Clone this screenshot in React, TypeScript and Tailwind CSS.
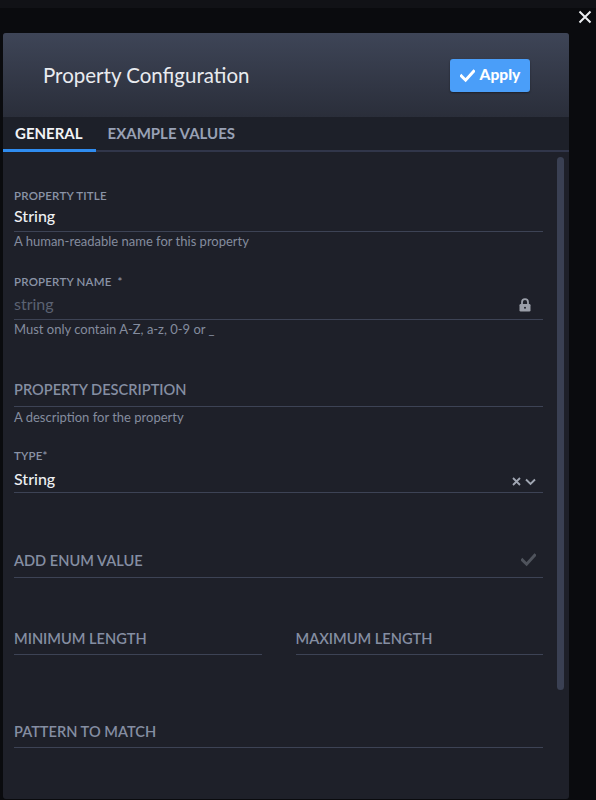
import React from 'react';

function Label({ children }: { children: React.ReactNode }) {
  return (
    <div className="h-[14px] text-[11.5px] leading-[14px] font-semibold tracking-[0.2px] text-[#8a93a6] uppercase">
      {children}
    </div>
  );
}

function Helper({ children, className = '' }: { children: React.ReactNode; className?: string }) {
  return <div className={`h-[16px] text-[13px] leading-[16px] text-[#848c9e] ${className}`}>{children}</div>;
}

function BigLabel({ children }: { children: React.ReactNode }) {
  return <span className="text-[14.6px] leading-[22px] font-semibold text-[#858ea2]">{children}</span>;
}

function LockIcon() {
  return (
    <svg width="12" height="14" viewBox="0 0 12 14" className="mb-[3px]">
      <path d="M3 6V4.2a3 3 0 0 1 6 0V6" fill="none" stroke="#9a9ea8" strokeWidth="1.8" />
      <rect x="0.5" y="6" width="11" height="7.5" rx="1.2" fill="#9a9ea8" />
      <circle cx="6" cy="9.7" r="1" fill="#1e2029" />
    </svg>
  );
}

function CheckIcon({ color, size = 15 }: { color: string; size?: number }) {
  return (
    <svg width={size} height={size} viewBox="0 0 16 16">
      <path d="M1.5 8.5 L6 13 L14.5 3.5" fill="none" stroke={color} strokeWidth="3.2" strokeLinecap="square" />
    </svg>
  );
}

export default function App() {
  return (
    <div className="min-h-[800px] w-full bg-[#0a0b0e] font-['Lato','Noto_Sans',sans-serif] overflow-hidden">
      <div className="h-[8px] bg-[#111216]" />
      <div className="h-[25px] flex justify-end pr-[4px] pt-[2px]">
        <svg width="14" height="14" viewBox="0 0 14 14">
          <path d="M1.5 1.5 L12.5 12.5 M12.5 1.5 L1.5 12.5" stroke="#eceef2" strokeWidth="2" />
        </svg>
      </div>

      <div className="ml-[3px] w-[566px] h-[766px] rounded-[3px] overflow-hidden bg-[#1e2029] flex flex-col">
        <div className="h-[84px] shrink-0 bg-gradient-to-b from-[#3e4557] to-[#2a2e3a] flex items-center justify-between pl-[40px] pr-[39px]">
          <div className="text-[20.5px] text-[#e9ebef] pt-[1px]">Property Configuration</div>
          <button className="h-[33px] w-[80px] rounded-[3px] bg-[#4a9ef9] flex items-center justify-center gap-[5px] text-white font-black text-[15.5px] shadow-[0_1px_2px_rgba(0,0,0,0.4)]">
            <CheckIcon color="#ffffff" size={15} />
            <span>Apply</span>
          </button>
        </div>

        <div className="h-[35px] shrink-0 bg-[#1d2029] border-b-2 border-[#31364a] flex">
          <div className="h-[35px] pl-[12px] pr-[13px] flex items-center border-b-[3px] border-[#2f8cf0] text-[15px] font-bold text-[#f2f3f5]">
            GENERAL
          </div>
          <div className="h-[33px] px-[12px] flex items-center text-[15px] font-bold text-[#98a1b5]">
            EXAMPLE VALUES
          </div>
        </div>

        <div className="flex flex-1 pl-[11px] pr-[4px]">
          <div className="w-[529px] pt-[37px]">
            <Label>Property Title</Label>
            <div className="h-[29px] border-b border-[#3d4355] flex items-end pb-[4px]">
              <span className="text-[16px] leading-[22px] font-medium text-[#eef0f3]">String</span>
            </div>
            <Helper className="mt-[1px]">A human-readable name for this property</Helper>

            <div className="mt-[26px]">
              <Label>
                Property Name <span className="ml-[3px]">*</span>
              </Label>
            </div>
            <div className="h-[31px] border-b border-[#3d4355] flex items-end justify-between pb-[4px] pr-[12px]">
              <span className="text-[16px] leading-[22px] text-[#5b6272]">string</span>
              <LockIcon />
            </div>
            <Helper className="mt-[1px]">Must only contain A-Z, a-z, 0-9 or _</Helper>

            <div className="mt-[35px] h-[35px] border-b border-[#3d4355] flex items-end pb-[5px]">
              <BigLabel>PROPERTY DESCRIPTION</BigLabel>
            </div>
            <Helper className="mt-[2px]">A description for the property</Helper>

            <div className="mt-[24px]">
              <Label>Type*</Label>
            </div>
            <div className="h-[30px] border-b border-[#3d4355] flex items-end justify-between pb-[2px] pr-[7px]">
              <span className="text-[16px] leading-[22px] font-medium text-[#eef0f3]">String</span>
              <div className="flex items-center gap-[4px] mb-[4px]">
                <svg width="9" height="9" viewBox="0 0 9 9">
                  <path d="M1 1 L8 8 M8 1 L1 8" stroke="#a0a6b2" strokeWidth="1.8" />
                </svg>
                <svg width="11" height="8" viewBox="0 0 11 8">
                  <path d="M1 1.5 L5.5 6 L10 1.5" fill="none" stroke="#a0a6b2" strokeWidth="1.9" />
                </svg>
              </div>
            </div>

            <div className="mt-[47px] h-[38px] border-b border-[#3d4355] flex items-end justify-between pb-[5px] pr-[7px]">
              <BigLabel>ADD ENUM VALUE</BigLabel>
              <div className="mb-[5px]">
                <CheckIcon color="#4f535c" size={15} />
              </div>
            </div>

            <div className="mt-[42px] grid grid-cols-2 gap-x-[34px]">
              <div className="h-[35px] border-b border-[#3d4355] flex items-end pb-[4px]">
                <BigLabel>MINIMUM LENGTH</BigLabel>
              </div>
              <div className="h-[35px] border-b border-[#3d4355] flex items-end pb-[4px]">
                <BigLabel>MAXIMUM LENGTH</BigLabel>
              </div>
            </div>

            <div className="mt-[57px] h-[36px] border-b border-[#3d4355] flex items-end pb-[4px]">
              <BigLabel>PATTERN TO MATCH</BigLabel>
            </div>
          </div>

          <div className="ml-[14px] w-[7px] pt-[5px]">
            <div className="h-[533px] rounded-full bg-[#3a4053]" />
          </div>
        </div>
      </div>
    </div>
  );
}
